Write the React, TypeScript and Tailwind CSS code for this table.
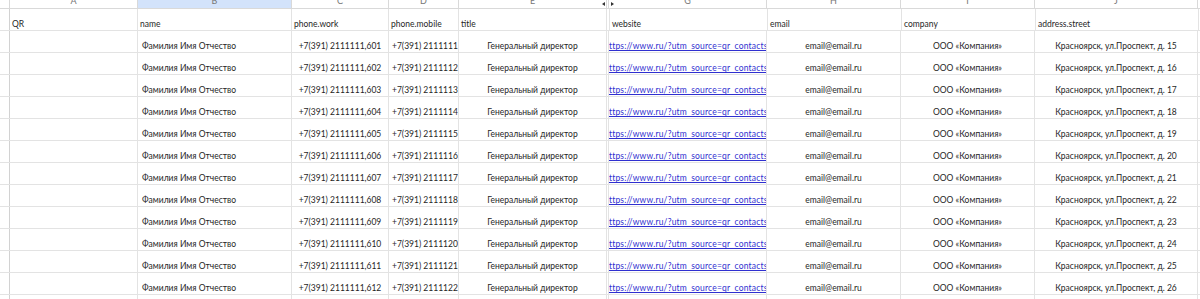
import React from "react";

const cols = [
  { key: "rn", w: "w-[10px]" },
  { key: "A", w: "w-[128px]" },
  { key: "B", w: "w-[154px]" },
  { key: "C", w: "w-[97px]" },
  { key: "D", w: "w-[70px]" },
  { key: "E", w: "w-[148px]" },
  { key: "F", w: "w-[2px]" },
  { key: "G", w: "w-[158px]" },
  { key: "H", w: "w-[134px]" },
  { key: "I", w: "w-[134px]" },
  { key: "J", w: "w-[163px]" },
];

const headers = ["", "QR", "name", "phone.work", "phone.mobile", "title", "", "website", "email", "company", "address.street"];

const rows = Array.from({ length: 13 }, (_, i) => ({
  work: `+7(391) 2111111,${601 + i}`,
  mobile: `+7(391) ${2111111 + i}`,
  street: `Красноярск, ул.Проспект, д. ${15 + i}`,
}));

const cell = "shrink-0 border-r border-[#e3e3e3] flex items-end pb-[1px] overflow-hidden";

export default function App() {
  return (
    <div className="w-[1200px] h-[299px] overflow-hidden bg-white text-[#1f1f1f] font-['Lato','Liberation_Sans',sans-serif] text-[8.5px] leading-[10px]">
      {/* column letters */}
      <div className="flex h-[9px] border-b border-[#d9d9d9] overflow-hidden">
        {cols.map((c) => (
          <div
            key={c.key}
            className={`${c.w} shrink-0 h-full border-r border-[#d9d9d9] overflow-hidden ${c.key === "B" ? "bg-[#d3e3fb]" : "bg-white"}`}
          >
            {c.key !== "rn" && c.key !== "F" && (
              <span className="block text-center text-[9px] leading-[9px] -mt-[4px] text-[#777]">{c.key}</span>
            )}
          </div>
        ))}
        <div className="flex-1" />
      </div>
      <div className="relative">
        {/* hidden column markers */}
        <div className="absolute left-[602px] -top-[7px] w-0 h-0 border-y-[2px] border-y-transparent border-r-[3px] border-r-[#333]" />
        <div className="absolute left-[611px] -top-[7px] w-0 h-0 border-y-[2px] border-y-transparent border-l-[3px] border-l-[#333]" />
      </div>
      {/* header row */}
      <div className="flex h-[22px] border-b border-[#e3e3e3]">
        {cols.map((c, i) => (
          <div key={c.key} className={`${c.w} h-full ${cell} ${c.key === "rn" ? "border-r-[#d2d2d2]" : ""} pl-[2px] whitespace-nowrap`}>
            {headers[i]}
          </div>
        ))}
        <div className="flex-1" />
      </div>
      {rows.map((r, idx) => (
        <div key={idx} className="flex h-[22px] border-b border-[#e3e3e3] whitespace-nowrap">
          <div className="w-[10px] shrink-0 border-r border-[#d2d2d2]" />
          <div className="w-[128px] shrink-0 border-r border-[#e3e3e3]" />
          <div className={`w-[154px] ${cell} pl-[4px]`}>Фамилия Имя Отчество</div>
          <div className={`w-[97px] ${cell} justify-center`}>{r.work}</div>
          <div className={`w-[70px] ${cell} pl-[3px]`}>{r.mobile}</div>
          <div className={`w-[148px] ${cell} justify-center`}>Генеральный директор</div>
          <div className="w-[2px] shrink-0 border-r border-[#e3e3e3]" />
          <div className={`w-[158px] ${cell}`}>
            <span className="-ml-[5px] text-[#3030d0] underline tracking-[0.2px]">https://www.ru/?utm_source=qr_contacts</span>
          </div>
          <div className={`w-[134px] ${cell} justify-center`}>email@email.ru</div>
          <div className={`w-[134px] ${cell} justify-center`}>ООО «Компания»</div>
          <div className={`w-[163px] ${cell} justify-center`}>{r.street}</div>
          <div className="flex-1" />
        </div>
      ))}
    </div>
  );
}
